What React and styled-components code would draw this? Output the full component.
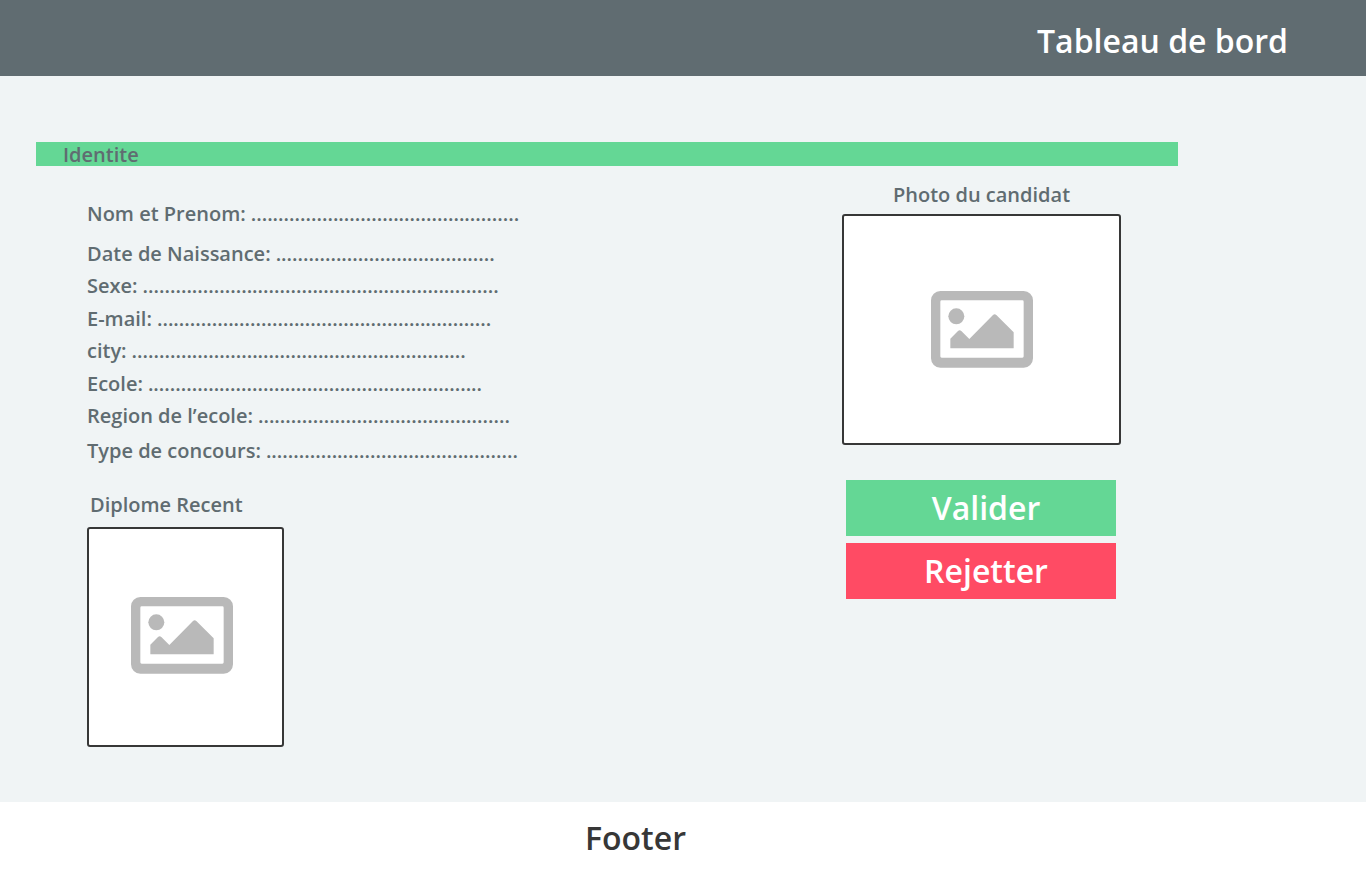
import React from "react";
import styled, { createGlobalStyle } from "styled-components";

const GlobalStyle = createGlobalStyle`
  *, *::before, *::after { box-sizing: border-box; }
  body {
    margin: 0;
    background: #ffffff;
    color: #606c71;
    font-family: "Open Sans", "Noto Sans", sans-serif;
    font-size: 20px;
    font-weight: 600;
    line-height: 24px;
  }
`;

const Page = styled.div`
  display: flex;
  flex-direction: column;
  min-height: 100vh;
`;

const Header = styled.header`
  display: flex;
  justify-content: flex-end;
  align-items: center;
  min-height: 76px;
  padding: 6px 78px 0 36px;
  background: #606c71;
`;

const Title = styled.h1`
  margin: 0;
  color: #ffffff;
  font-size: 32px;
  font-weight: 600;
  line-height: 40px;
`;

const Main = styled.main`
  flex: 1;
  padding: 66px 188px 54px 36px;
  background: #f0f4f5;
`;

const SectionTitle = styled.h2`
  height: 24px;
  margin: 0;
  padding-left: 27px;
  background: #64d795;
  font-size: 20px;
  font-weight: 600;
  line-height: 26px;
`;

const Columns = styled.div`
  display: flex;
  justify-content: space-between;
  padding: 16px 57px 0 51px;
`;

const Details = styled.div`
  padding-top: 20px;
`;

const FieldList = styled.dl`
  display: flex;
  flex-direction: column;
  justify-content: space-between;
  min-height: ${(p) => p.$height || 24}px;
  margin: 0 0 ${(p) => p.$after || 0}px;
`;

const Field = styled.div`
  display: flex;
  gap: 5px;
  white-space: nowrap;
`;

const Term = styled.dt`
  margin: 0;
`;

const Blank = styled.dd`
  margin: 0;
`;

const Figure = styled.figure`
  display: flex;
  flex-direction: column;
  gap: ${(p) => p.$gap}px;
  margin: 0;
`;

const Caption = styled.figcaption`
  padding-left: ${(p) => (p.$align === "left" ? 3 : 0)}px;
  text-align: ${(p) => p.$align};
`;

const Frame = styled.div`
  display: flex;
  align-items: center;
  justify-content: center;
  width: ${(p) => p.$width}px;
  height: ${(p) => p.$height}px;
  padding: ${(p) => p.$padding || "0"};
  border: 2px solid #373737;
  border-radius: 3px;
  background: #ffffff;
`;

const Side = styled.aside`
  flex: none;
  padding-top: 1px;
`;

const Actions = styled.div`
  display: flex;
  flex-direction: column;
  gap: 7px;
  margin-top: 35px;
  padding: 0 5px 0 4px;
`;

const ActionButton = styled.button`
  height: 56px;
  padding: 0 0 0 10px;
  border: 0;
  background: ${(p) => (p.$danger ? "#ff4b64" : "#64d795")};
  color: #ffffff;
  font: inherit;
  font-size: 32px;
  line-height: 40px;
  cursor: pointer;
`;

const Footer = styled.footer`
  min-height: 67px;
  padding: 16px 95px 11px 0;
  background: #ffffff;
  color: #373737;
  font-size: 32px;
  line-height: 40px;
  text-align: center;
`;

const PictureIcon = () => (
  <svg width="102" height="77" viewBox="0 0 306 231" fill="#b9b9b9" aria-hidden="true">
    <path
      fillRule="evenodd"
      d="M28 0H278A28 28 0 0 1 306 28V202A28 28 0 0 1 278 230H28A28 28 0 0 1 0 202V28A28 28 0 0 1 28 0ZM32 28Q28 28 28 32V196Q28 200 32 200H274Q278 200 278 196V32Q278 28 274 28Z"
    />
    <circle cx="76" cy="76" r="24" />
    <path d="M58 172V143L81 120Q86 115 91 120L115 144L186 72Q191 67 196 72L248 124V172Z" />
  </svg>
);

const birthAndSchool = [
  ["Date de Naissance:", 40],
  ["Sexe:", 65],
  ["E-mail:", 61],
  ["city:", 61],
  ["Ecole:", 61],
  ["Region de l’ecole:", 46],
];

const Row = ({ label, dots }) => (
  <Field>
    <Term>{label}</Term>
    <Blank>{".".repeat(dots)}</Blank>
  </Field>
);

export default function App() {
  return (
    <Page>
      <GlobalStyle />
      <Header>
        <Title>Tableau de bord</Title>
      </Header>
      <Main>
        <SectionTitle>Identite</SectionTitle>
        <Columns>
          <Details>
            <FieldList $after={16}>
              <Row label="Nom et Prenom:" dots={49} />
            </FieldList>
            <FieldList $height={186} $after={11}>
              {birthAndSchool.map(([label, dots]) => (
                <Row key={label} label={label} dots={dots} />
              ))}
            </FieldList>
            <FieldList $after={30}>
              <Row label="Type de concours:" dots={46} />
            </FieldList>
            <Figure $gap={10}>
              <Caption $align="left">Diplome Recent</Caption>
              <Frame $width={197} $height={220} $padding="0 8px 3px 0">
                <PictureIcon />
              </Frame>
            </Figure>
          </Details>
          <Side>
            <Figure $gap={7}>
              <Caption $align="center">Photo du candidat</Caption>
              <Frame $width={279} $height={231}>
                <PictureIcon />
              </Frame>
            </Figure>
            <Actions>
              <ActionButton type="button">Valider</ActionButton>
              <ActionButton type="button" $danger>
                Rejetter
              </ActionButton>
            </Actions>
          </Side>
        </Columns>
      </Main>
      <Footer>Footer</Footer>
    </Page>
  );
}
